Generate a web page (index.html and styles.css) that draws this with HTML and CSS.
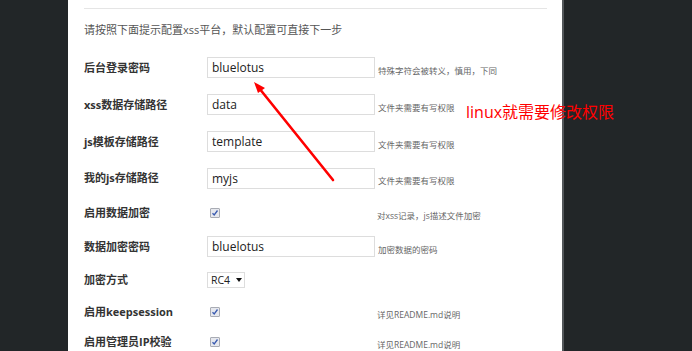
FILE: index.html
```html
<!DOCTYPE html>
<html lang="zh-CN">
<head>
    <meta charset="UTF-8">
    <title>安装向导</title>
    <link rel="stylesheet" href="styles.css">
</head>
<body>
    <div class="page">
        <div class="side"></div>
        <div class="main">
            <hr class="line">
            <p class="intro">请按照下面提示配置xss平台，默认配置可直接下一步</p>

            <form class="config">
                <div class="row">
                    <label>后台登录密码</label>
                    <input type="text" value="bluelotus">
                    <span class="help">特殊字符会被转义，慎用，下同</span>
                </div>
                <div class="row">
                    <label>xss数据存储路径</label>
                    <input type="text" value="data">
                    <span class="help">文件夹需要有写权限</span>
                </div>
                <div class="row">
                    <label>js模板存储路径</label>
                    <input type="text" value="template">
                    <span class="help">文件夹需要有写权限</span>
                </div>
                <div class="row r4">
                    <label>我的js存储路径</label>
                    <input type="text" value="myjs">
                    <span class="help">文件夹需要有写权限</span>
                </div>
                <div class="row check-row r5">
                    <label>启用数据加密</label>
                    <span class="check"><svg width="8" height="8" viewBox="0 0 8 8"><path d="M1.5 4.2 L3.2 6 L6.5 1.5" fill="none" stroke="#3a5bb0" stroke-width="1.3"/></svg></span>
                    <span class="help">对xss记录，js描述文件加密</span>
                </div>
                <div class="row r6">
                    <label>数据加密密码</label>
                    <input type="text" value="bluelotus">
                    <span class="help">加密数据的密码</span>
                </div>
                <div class="row r7">
                    <label>加密方式</label>
                    <div class="select">RC4<span class="caret"></span></div>
                    <span class="help"></span>
                </div>
                <div class="row check-row r8">
                    <label>启用keepsession</label>
                    <span class="check"><svg width="8" height="8" viewBox="0 0 8 8"><path d="M1.5 4.2 L3.2 6 L6.5 1.5" fill="none" stroke="#3a5bb0" stroke-width="1.3"/></svg></span>
                    <span class="help">详见README.md说明</span>
                </div>
                <div class="row check-row r9">
                    <label>启用管理员IP校验</label>
                    <span class="check"><svg width="8" height="8" viewBox="0 0 8 8"><path d="M1.5 4.2 L3.2 6 L6.5 1.5" fill="none" stroke="#3a5bb0" stroke-width="1.3"/></svg></span>
                    <span class="help">详见README.md说明</span>
                </div>
            </form>
        </div>
        <div class="side right"></div>
    </div>

    <!-- annotation -->
    <svg class="arrow" width="692" height="351" viewBox="0 0 692 351">
        <line x1="333" y1="180" x2="259" y2="88" stroke="#f00" stroke-width="2.6" stroke-linecap="round"/>
        <polygon points="254,82 265,88 258,93" fill="#f00"/>
    </svg>
    <div class="note">linux就需要修改权限</div>
</body>
</html>
```

FILE: styles.css
```css
* {
    box-sizing: border-box;
    margin: 0;
    padding: 0;
}

body {
    background-color: #222628;
    font-family: 'Open Sans', 'Noto Sans CJK SC', sans-serif;
    color: #333;
    overflow: hidden;
}

.page {
    display: flex;
    height: 351px;
}

.side {
    width: 68px;
    background-color: #222628;
}

.side.right {
    flex: 1;
}

.main {
    width: 496px;
    background-color: #fff;
    border-right: 2px solid #53575a;
    padding: 0 15px 0 16px;
}

.line {
    border: none;
    border-top: 1px solid #e5e5e5;
    margin-top: 8px;
}

.intro {
    margin-top: 12px;
    font-size: 11px;
    line-height: 18px;
    color: #555;
}

.config {
    margin-top: 10px;
}

.row {
    display: grid;
    grid-template-columns: 123px 168px auto;
    align-items: center;
    height: 37px;
}

.r4 { height: 36px; }
.r5 { height: 33px; }
.r6 { height: 35px; }
.r7 { height: 32px; }
.r8 { height: 31px; }
.r9 { height: 30px; }

.row label {
    font-size: 11px;
    font-weight: bold;
    color: #333;
    margin-top: -2px;
}

.row input {
    width: 168px;
    height: 21px;
    border: 1px solid #ddd;
    padding: 0 4px;
    font-family: 'Open Sans', 'Noto Sans CJK SC', sans-serif;
    font-size: 12px;
    color: #222;
}

.help {
    font-size: 8.5px;
    color: #666;
    margin-left: 3px;
    margin-top: 4px;
}

.check-row .help {
    margin-left: 2px;
}

.check {
    display: flex;
    align-items: center;
    justify-content: center;
    width: 10px;
    height: 10px;
    margin-left: 3px;
    border: 1px solid #a9acb4;
    border-radius: 1px;
    background-color: #e6e8ee;
}

.select {
    display: flex;
    align-items: center;
    width: 38px;
    height: 16px;
    border: 1px solid #ddd;
    padding-left: 3px;
    font-size: 10.5px;
    color: #222;
}

.caret {
    width: 0;
    height: 0;
    margin-left: 6px;
    border-left: 3px solid transparent;
    border-right: 3px solid transparent;
    border-top: 4px solid #111;
}

.arrow {
    position: absolute;
    left: 0;
    top: 0;
    pointer-events: none;
}

.note {
    position: absolute;
    left: 466px;
    top: 101px;
    font-size: 16px;
    line-height: 22px;
    color: #f00;
}
```
